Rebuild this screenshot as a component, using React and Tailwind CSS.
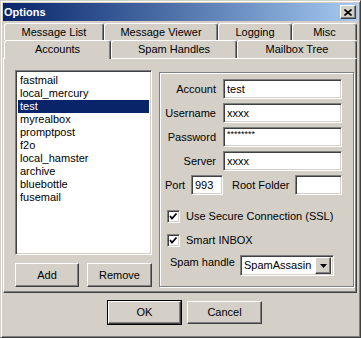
import React from 'react';

const raised =
  'border border-t-white border-l-white border-r-[#404040] border-b-[#404040] bg-[#d4d0c8] shadow-[inset_-1px_-1px_0_#808080]';
const sunken =
  'border border-t-[#808080] border-l-[#808080] border-r-white border-b-white bg-white shadow-[inset_1px_1px_0_#404040,inset_-1px_-1px_0_#d4d0c8]';

const cuentas = [
  'fastmail',
  'local_mercury',
  'test',
  'myrealbox',
  'promptpost',
  'f2o',
  'local_hamster',
  'archive',
  'bluebottle',
  'fusemail',
];

function Pestana({ label, className = '', activa = false }) {
  return (
    <div
      className={`flex items-center justify-center rounded-t-[3px] border-t border-l border-r border-t-white border-l-white border-r-[#404040] bg-[#d4d0c8] shadow-[inset_-1px_0_0_#808080] ${
        activa ? 'relative z-10 -mb-[1px]' : ''
      } ${className}`}
    >
      {label}
    </div>
  );
}

function Campo({ label, valor, small = false }) {
  return (
    <div className="flex h-[20px] items-center">
      <span className="w-[56px] text-right">{label}</span>
      <div className={`ml-[7px] flex h-[20px] w-[119px] px-[3px] ${sunken} ${small ? 'items-start pt-[2px] text-[9px] leading-[9px]' : 'items-center'}`}>
        {valor}
      </div>
    </div>
  );
}

function Casilla({ label }) {
  return (
    <div className="flex h-[13px] items-center pl-[7px]">
      <div className={`flex h-[13px] w-[13px] items-center justify-center ${sunken}`}>
        <svg width="9" height="9" viewBox="0 0 9 9">
          <polyline points="1,4 3,6.5 7.5,1.5" fill="none" stroke="#000" strokeWidth="1.8" />
        </svg>
      </div>
      <span className="ml-[6px]">{label}</span>
    </div>
  );
}

function Boton({ children, className = '' }) {
  return <div className={`flex items-center justify-center ${raised} ${className}`}>{children}</div>;
}

export default function App() {
  return (
    <div className="h-[338px] w-[361px] bg-white">
      <div
        className={`h-[338px] w-[361px] border border-t-[#d4d0c8] border-l-[#d4d0c8] border-r-[#404040] border-b-[#404040] bg-[#d4d0c8] p-[2px] text-[11px] leading-[13px] text-black shadow-[inset_1px_1px_0_#fff,inset_-1px_-1px_0_#808080] font-['Liberation_Sans',Arial,sans-serif]`}
      >
        {/* barra de titulo */}
        <div className="flex h-[18px] w-[355px] items-center justify-between bg-gradient-to-r from-[#0a246a] to-[#a6caf0] pl-[1px] pr-[2px]">
          <span className="text-[11px] font-bold text-white">Options</span>
          <div className={`flex h-[14px] w-[16px] items-center justify-center ${raised}`}>
            <svg width="8" height="7" viewBox="0 0 8 7">
              <path d="M0.5 0.5 L7.5 6.5 M7.5 0.5 L0.5 6.5" stroke="#000" strokeWidth="1.6" />
            </svg>
          </div>
        </div>

        {/* pestanas */}
        <div className="mt-[2px] pl-[1px]">
          <div className="flex h-[17px]">
            <Pestana label="Message List" className="w-[100px]" />
            <Pestana label="Message Viewer" className="w-[114px]" />
            <Pestana label="Logging" className="w-[74px]" />
            <Pestana label="Misc" className="w-[65px]" />
          </div>
          <div className="flex h-[18px] items-start">
            <Pestana label="Accounts" className="h-[19px] w-[107px] pb-[2px]" activa />
            <Pestana label="Spam Handles" className="h-[18px] w-[126px]" />
            <Pestana label="Mailbox Tree" className="h-[18px] w-[120px]" />
          </div>
        </div>

        {/* panel */}
        <div className="flex h-[235px] w-[354px] items-start border border-t-white border-l-white border-r-[#404040] border-b-[#404040] pt-[11px] pl-[11px] shadow-[inset_-1px_-1px_0_#808080]">
          <div className="flex flex-col">
            <div className={`h-[185px] w-[137px] p-[2px] pt-[3px] ${sunken}`}>
              {cuentas.map((c) => (
                <div
                  key={c}
                  className={`h-[13px] pl-[2px] ${c === 'test' ? 'bg-[#0a246a] text-white' : ''}`}
                >
                  {c}
                </div>
              ))}
            </div>
            <div className="mt-[8px] flex gap-[8px]">
              <Boton className="h-[24px] w-[64px]">Add</Boton>
              <Boton className="h-[24px] w-[65px]">Remove</Boton>
            </div>
          </div>

          <div className="ml-[7px] mt-[2px] h-[215px] w-[195px] border border-[#808080] pt-[6px] shadow-[1px_1px_0_#fff,inset_1px_1px_0_#fff]">
            <div className="flex flex-col gap-[4px]">
              <Campo label="Account" valor="test" />
              <Campo label="Username" valor="xxxx" />
              <Campo label="Password" valor="********" small />
              <Campo label="Server" valor="xxxx" />
              <div className="flex h-[20px] items-center pl-[5px]">
                <span className="w-[26px]">Port</span>
                <div className={`flex h-[20px] w-[32px] items-center px-[3px] ${sunken}`}>993</div>
                <span className="ml-[9px] w-[63px]">Root Folder</span>
                <div className={`h-[20px] w-[47px] ${sunken}`} />
              </div>
            </div>

            <div className="mt-[15px] flex flex-col gap-[11px]">
              <Casilla label="Use Secure Connection (SSL)" />
              <Casilla label="Smart INBOX" />
            </div>

            <div className="mt-[8px] flex items-start pl-[10px]">
              <span className="mt-[1px] w-[70px]">Spam handle</span>
              <div className={`flex h-[21px] w-[94px] items-center justify-between p-[2px] pl-[3px] ${sunken}`}>
                <span>SpamAssasin</span>
                <div className={`flex h-[17px] w-[16px] items-center justify-center ${raised}`}>
                  <svg width="7" height="4" viewBox="0 0 7 4">
                    <path d="M0 0 H7 L3.5 4 Z" fill="#000" />
                  </svg>
                </div>
              </div>
            </div>
          </div>
        </div>

        {/* botones */}
        <div className="mt-[7px] flex items-start pl-[104px]">
          <div className="border border-black">
            <Boton className="h-[23px] w-[73px]">OK</Boton>
          </div>
          <Boton className="ml-[5px] mt-[1px] h-[23px] w-[75px]">Cancel</Boton>
        </div>
      </div>
    </div>
  );
}
